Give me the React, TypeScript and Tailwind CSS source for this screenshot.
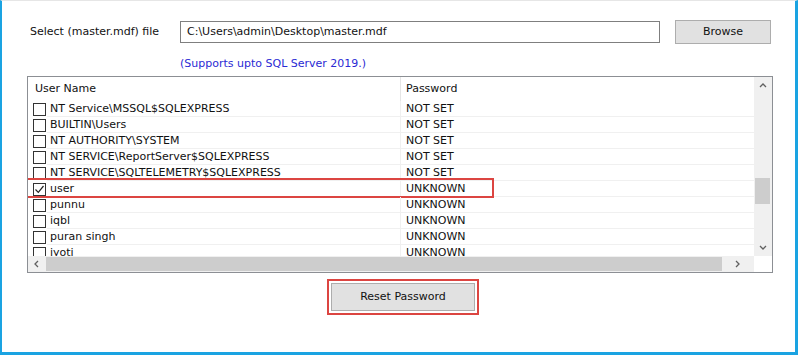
import React from "react";

const rows: { name: string; pw: string; checked?: boolean }[] = [
  { name: "NT Service\\MSSQL$SQLEXPRESS", pw: "NOT SET" },
  { name: "BUILTIN\\Users", pw: "NOT SET" },
  { name: "NT AUTHORITY\\SYSTEM", pw: "NOT SET" },
  { name: "NT SERVICE\\ReportServer$SQLEXPRESS", pw: "NOT SET" },
  { name: "NT SERVICE\\SQLTELEMETRY$SQLEXPRESS", pw: "NOT SET" },
  { name: "user", pw: "UNKNOWN", checked: true },
  { name: "punnu", pw: "UNKNOWN" },
  { name: "iqbl", pw: "UNKNOWN" },
  { name: "puran singh", pw: "UNKNOWN" },
  { name: "jyoti", pw: "UNKNOWN" },
];

function Check({ checked }: { checked?: boolean }) {
  return (
    <div className="w-[13px] h-[13px] border border-[#333333] bg-white shrink-0 flex items-center justify-center">
      {checked && (
        <svg width="11" height="11" viewBox="0 0 11 11">
          <path d="M1.5 5.5 L4.3 8.3 L9.5 2" fill="none" stroke="#222" strokeWidth="1.2" />
        </svg>
      )}
    </div>
  );
}

function Chevron({ dir }: { dir: "up" | "down" | "left" | "right" }) {
  const d = {
    up: "M1 5 L4 2 L7 5",
    down: "M1 2 L4 5 L7 2",
    left: "M5 1 L2 4 L5 7",
    right: "M2 1 L5 4 L2 7",
  }[dir];
  return (
    <svg width="8" height="8" viewBox="0 0 8 8">
      <path d={d} fill="none" stroke="#606060" strokeWidth="1.3" />
    </svg>
  );
}

export default function App() {
  return (
    <div className="w-[800px] h-[355px] bg-white" style={{ fontFamily: '"DejaVu Sans", Tahoma, sans-serif' }}>
      <div className="w-[798px] h-[355px] border-t border-t-[#e6e6e6] border-l-2 border-r-[3px] border-b-[3px] border-l-[#1aa3e2] border-r-[#1aa3e2] border-b-[#1aa3e2] text-[11px] text-[#111]">
        {/* top row */}
        <div className="flex items-center mt-[19px] ml-[28px] h-[24px]">
          <div className="w-[150px] pt-[1px]">Select (master.mdf) file</div>
          <div className="w-[480px] h-[22px] border border-[#7f7f7f] flex items-center pl-[6px]">
            C:\Users\admin\Desktop\master.mdf
          </div>
          <div className="ml-[15px] w-[96px] h-[24px] border border-[#adadad] bg-[#e1e1e1] flex items-center justify-center pt-[1px]">
            Browse
          </div>
        </div>
        <div className="ml-[178px] mt-[13px] h-[14px] leading-[14px] text-[#2a2ad4]">
          (Supports upto SQL Server 2019.)
        </div>

        {/* list box */}
        <div className="ml-[25px] mt-[5px] w-[746px] h-[197px] border border-[#8c8f94] flex flex-col">
          <div className="flex h-[179px]">
            <div className="w-[726px] h-[179px] overflow-hidden">
              <div className="flex h-[24px] items-center">
                <div className="w-[373px] pl-[7px] pt-[1px] h-full flex items-center border-r border-[#e5e5e5]">User Name</div>
                <div className="pl-[5px] pt-[1px]">Password</div>
              </div>
              {rows.map((r) => (
                <div key={r.name} className="relative flex h-[16px] items-center">
                  <div className="w-[373px] h-full flex items-center pl-[5px] border-r border-[#f0f0f0]">
                    <Check checked={r.checked} />
                    <div className="ml-[1px] pl-[3px] pt-[2px] flex-1 h-full flex items-center border-b border-[#f0f0f0]">{r.name}</div>
                  </div>
                  <div className="flex-1 h-full flex items-center pl-[5px] pt-[2px] border-b border-[#f0f0f0]">{r.pw}</div>
                  {r.checked && (
                    <div className="absolute left-[-3px] top-[-3px] w-[469px] h-[20px] border-2 border-[#dc4541]" />
                  )}
                </div>
              ))}
            </div>
            <div className="w-[18px] h-[179px] bg-[#f0f0f0] flex flex-col items-center">
              <div className="h-[17px] flex items-center justify-center"><Chevron dir="up" /></div>
              <div className="flex-1 w-full relative">
                <div className="absolute left-[1px] right-[2px] top-[84px] h-[26px] bg-[#cdcdcd]" />
              </div>
              <div className="h-[17px] flex items-center justify-center"><Chevron dir="down" /></div>
            </div>
          </div>
          <div className="flex h-[16px]">
            <div className="w-[726px] h-full bg-[#f0f0f0] flex items-center">
              <div className="w-[18px] flex items-center justify-center"><Chevron dir="left" /></div>
              <div className="w-[676px] h-[14px] bg-[#cdcdcd]" />
              <div className="flex-1 flex items-center justify-center"><Chevron dir="right" /></div>
            </div>
            <div className="flex-1 bg-white" />
          </div>
        </div>

        {/* reset button */}
        <div className="ml-[325px] mt-[6px] w-[152px] h-[36px] border-2 border-[#dc4541] p-[2px]">
          <div className="w-full h-full border border-[#adadad] bg-[#e1e1e1] flex items-center justify-center pt-[1px]">
            Reset Password
          </div>
        </div>
      </div>
    </div>
  );
}
